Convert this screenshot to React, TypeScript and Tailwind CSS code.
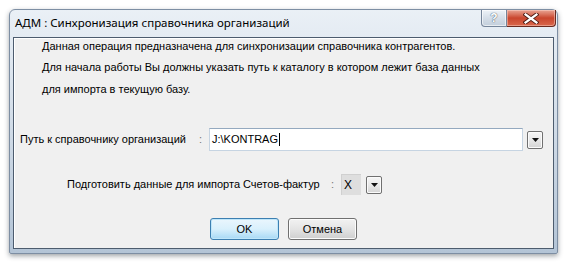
const body = { fontFamily: '"Liberation Sans", Arial, sans-serif' };

function DropButton({ className }: { className: string }) {
	return (
		<div
			className={`flex items-center justify-center rounded-[2px] border border-[#707070] bg-gradient-to-b from-[#f6f6f6] via-[#e8e8e8] to-[#d4d4d4] shadow-[inset_0_0_0_1px_#fbfbfb] ${className}`}
		>
			<svg width="7" height="4" viewBox="0 0 7 4">
				<polygon points="0,0 7,0 3.5,4" fill="#111" />
			</svg>
		</div>
	);
}

function CaptionButtons() {
	return (
		<div className="flex">
			<div className="flex h-[17px] w-[26px] items-center justify-center rounded-bl-[4px] border border-t-0 border-[#75859a] bg-gradient-to-b from-[#eef3f8] via-[#d5dee8] to-[#c2cedb] shadow-[inset_0_0_0_1px_rgba(255,255,255,0.6)]">
				<span
					className="text-[12px] font-bold leading-none text-white"
					style={{ textShadow: '0 0 1px #4a5a6c, 0 0 1px #4a5a6c', fontFamily: '"Liberation Sans", sans-serif' }}
				>
					?
				</span>
			</div>
			<div className="flex h-[17px] w-[49px] items-center justify-center rounded-br-[4px] border border-l-0 border-t-0 border-[#6a2a1f] bg-gradient-to-b from-[#e8a494] via-[#c9452d] to-[#d9684c] shadow-[inset_0_0_0_1px_rgba(255,220,210,0.45)]">
				<svg width="16" height="11" viewBox="0 0 16 11">
					<path d="M2.5 1.5 L13.5 9.5 M13.5 1.5 L2.5 9.5" stroke="#4a1a12" strokeWidth="4" strokeLinecap="square" />
					<path d="M2.5 1.5 L13.5 9.5 M13.5 1.5 L2.5 9.5" stroke="#ffffff" strokeWidth="2.2" strokeLinecap="square" />
				</svg>
			</div>
		</div>
	);
}

export default function App() {
	return (
		<div className="h-[265px] w-[570px] bg-white pl-[9px] pt-[9px]">
			<div className="flex h-[245px] w-[549px] flex-col rounded-t-[6px] rounded-b-[2px] border border-[#7d8ea3] bg-gradient-to-b from-[#eaf0f6] via-[#d0dbe7] to-[#b3c4d6] shadow-[0_2px_5px_rgba(40,50,60,0.45)]">
				<div className="flex h-[27px] justify-between pl-[5px] pr-[1px]">
					<span
						className="pt-[5px] text-[11.5px] leading-[16px] text-black"
						style={{ fontFamily: '"Noto Sans", "Open Sans", sans-serif' }}
					>
						АДМ : Синхронизация справочника организаций
					</span>
					<CaptionButtons />
				</div>
				<div className="mx-[3px] flex h-[212px] flex-col border border-[#4d5c6e] bg-[#f0f0f0] text-[11px] text-black shadow-[inset_1px_1px_0_#ffffff]" style={body}>
					<div className="mt-[0.5px] flex flex-col gap-[7.5px] pl-[28px] leading-[14px]">
						<span>Данная операция предназначена для синхронизации справочника контрагентов.</span>
						<span>Для начала работы Вы должны указать путь к каталогу в котором лежит база данных</span>
						<span>для импорта в текущую базу.</span>
					</div>
					<div className="mt-[32.5px] flex h-[23px] items-center pl-[6px]">
						<span className="w-[179px]">Путь к справочнику организаций</span>
						<span className="w-[10px] text-[#777]">:</span>
						<div className="flex h-[23px] w-[314px] items-center border border-[#c6d4e2] border-t-[#94a9bf] bg-white pl-[2px] text-[11px]">
							<span>J:\KONTRAG</span>
							<span className="ml-[1px] h-[13px] w-[1px] bg-black" />
						</div>
						<DropButton className="ml-[4px] h-[18px] w-[16px]" />
					</div>
					<div className="mt-[23px] flex h-[21px] items-center pl-[53px]">
						<span className="w-[264px]">Подготовить данные для импорта Счетов-фактур</span>
						<span className="w-[10px] text-[#777]">:</span>
						<div className="flex h-[21px] w-[20px] items-center bg-[#dedede] pl-[3px] text-[12px] shadow-[inset_1px_1px_0_#d0d0d0]">X</div>
						<DropButton className="ml-[5px] h-[18px] w-[16px]" />
					</div>
					<div className="mt-[23px] flex justify-center gap-[9px]">
						<button className="flex h-[22px] w-[69px] items-center justify-center rounded-[3px] border border-[#3c7fb1] bg-gradient-to-b from-[#eaf6fd] via-[#d9f0fc] to-[#a7d9f5] text-[11px] shadow-[inset_0_0_0_1px_#bfe6fa]">
							OK
						</button>
						<button className="flex h-[22px] w-[69px] items-center justify-center rounded-[3px] border border-[#707070] bg-gradient-to-b from-[#f2f2f2] via-[#e4e4e4] to-[#cfcfcf] text-[11px] shadow-[inset_0_0_0_1px_#fcfcfc]">
							Отмена
						</button>
					</div>
				</div>
			</div>
		</div>
	);
}
